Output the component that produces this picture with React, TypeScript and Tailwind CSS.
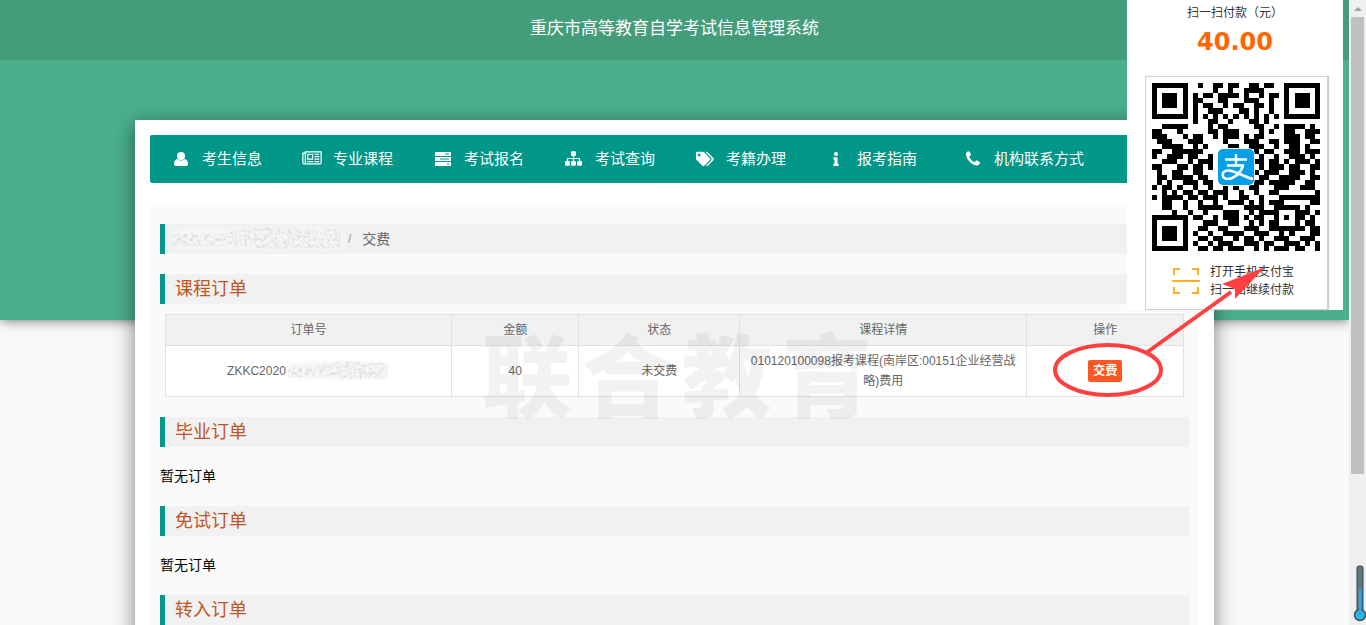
import type { ReactNode } from "react";
import { FaInfo, FaTags } from "react-icons/fa";

const qrRows = [
  "111111100100110110011011001111111",
  "100000100000100100111100001000001",
  "101110101011011110100101101011101",
  "101110101100011000111001001011101",
  "101110101011001011001101001011101",
  "100000101001110001101001001000001",
  "111111101010101010101010101111111",
  "000000001001100100011010000000000",
  "001111100001011000001100101111010",
  "110001000001101110000101001100111",
  "111000101100101110101100001110110",
  "011100011100001000111001101110011",
  "001111001010000110011100100110100",
  "110011111100000000001011001110111",
  "100111011001000000000100100111010",
  "001110010111000000001101101011101",
  "110001101101000000000101110110011",
  "010011001100000000001011100111010",
  "011011110110000000000110011110011",
  "010100111011000000001101111100110",
  "101101001001001010011000111001110",
  "001010110110111001001001100000001",
  "101111011011101001100100011111111",
  "001100100100100111010101110000011",
  "001100100111110000111100111110100",
  "000010010010001110010111100011101",
  "111111101100101110101100101011010",
  "100000100011100110010101100010110",
  "101110100110011000111001111111011",
  "101110101001001111001110010100011",
  "101110100110110010110100111001110",
  "100000101001011100111011001110101",
  "111111100110110111001010111011001",
];

const qrPath = qrRows
  .flatMap((row, y) => [...row].map((cell, x) => (cell === "1" ? `M${x} ${y}h1v1h-1z` : "")))
  .join("");

const navItems: { label: string; icon: ReactNode }[] = [
  {
    label: "考生信息",
    icon: (
      <svg viewBox="0 0 16 16" className="size-4 fill-current">
        <circle cx="8" cy="5" r="4" />
        <path d="M4.600 8Q8 11 11.400 8Q15 8.500 15 13Q15 15 13 15H3Q1 15 1 13Q1 8.500 4.600 8z" />
      </svg>
    ),
  },
  {
    label: "专业课程",
    icon: (
      <svg viewBox="0 0 2048 1792" className="h-[17px] w-5 fill-current">
        <path d="M1024 512h-384v384h384v-384zm128 640v128h-640v-128h640zm0-768v640h-640v-640h640zm640 768v128h-512v-128h512zm0-256v128h-512v-128h512zm0-256v128h-512v-128h512zm0-256v128h-512v-128h512zm-1536 960v-960h-128v960q0 26 19 45t45 19 45-19 19-45zm1664 0v-1088h-1536v1088q0 33-11 64h1483q26 0 45-19t19-45zm128-1216v1216q0 80-56 136t-136 56h-1664q-80 0-136-56t-56-136v-1088h256v-128h1792z" />
      </svg>
    ),
  },
  {
    label: "考试报名",
    icon: (
      <svg viewBox="0 0 18 14" className="h-[14px] w-[18px] fill-current">
        <path
          fillRule="evenodd"
          d="M1 0h16v4H1zM11 1.5v1h4v-1zM1 5h16v4H1zM6 6.5v1h9v-1zM1 10h16v4H1zM13 11.5v1h2v-1z"
        />
      </svg>
    ),
  },
  {
    label: "考试查询",
    icon: (
      <svg viewBox="0 0 1792 1792" className="size-[17px] fill-current">
        <path d="M1792 1248v320q0 40-28 68t-68 28h-320q-40 0-68-28t-28-68v-320q0-40 28-68t68-28h96v-192h-512v192h96q40 0 68 28t28 68v320q0 40-28 68t-68 28h-320q-40 0-68-28t-28-68v-320q0-40 28-68t68-28h96v-192h-512v192h96q40 0 68 28t28 68v320q0 40-28 68t-68 28h-320q-40 0-68-28t-28-68v-320q0-40 28-68t68-28h96v-192q0-52 38-90t90-38h512v-192h-96q-40 0-68-28t-28-68v-320q0-40 28-68t68-28h320q40 0 68 28t28 68v320q0 40-28 68t-68 28h-96v192h512q52 0 90 38t38 90v192h96q40 0 68 28t28 68z" />
      </svg>
    ),
  },
  { label: "考籍办理", icon: <FaTags className="size-[18px]" /> },
  { label: "报考指南", icon: <FaInfo className="size-[14px]" /> },
  {
    label: "机构联系方式",
    icon: (
      <svg viewBox="0 0 1792 1792" className="size-[18px] fill-current">
        <path d="M1600 1240q0 27-10 70.5t-21 68.5q-21 50-122 106-94 51-186 51-27 0-53-3.5t-57.5-12.5-47-14.5-55.5-20.5-49-18q-98-35-175-83-127-79-264-216t-216-264q-48-77-83-175-3-9-18-49t-20.5-55.5-14.5-47-12.5-57.5-3.5-53q0-92 51-186 56-101 106-122 25-11 68.5-21t70.5-10q14 0 21 3 18 6 53 76 11 19 30 54t35 63.5 31 53.5q3 4 17.5 25t21.5 35.5 7 28.5q0 20-28.5 50t-62 55-62 53-28.5 46q0 9 5 22.5t8.5 20.5 14 24 11.5 19q76 137 174 235t235 174q2 1 19 11.5t24 14 20.5 8.5 22.5 5q18 0 46-28.5t53-62 55-62 50-28.5q14 0 28.5 7t35.5 21.5 25 17.5q25 15 53.5 31t63.5 35 54 30q70 35 76 53 3 7 3 21z" />
      </svg>
    ),
  },
];

// grainy patch over private data
function Smudge({ id, className }: { id: string; className: string }) {
  return (
    <svg className={className} aria-hidden="true">
      <defs>
        <filter id={`${id}-noise`} x="0" y="0" width="100%" height="100%">
          <feTurbulence type="fractalNoise" baseFrequency="0.3" numOctaves="3" seed="4" />
          <feColorMatrix values="0 0 0 0 0.72  0 0 0 0 0.72  0 0 0 0 0.72  2.6 0 0 0 -1.05" />
          <feComposite in2="SourceGraphic" operator="in" />
        </filter>
        <filter id={`${id}-soft`}>
          <feGaussianBlur stdDeviation="2" />
        </filter>
      </defs>
      <rect x="1%" y="12%" width="98%" height="70%" rx="8" fill="#f6f6f6" filter={`url(#${id}-soft)`} />
      <g filter={`url(#${id}-noise)`}>
        <rect x="0" y="30%" width="60%" height="45%" rx="4" />
        <ellipse cx="58%" cy="46%" rx="30%" ry="38%" />
        <rect x="60%" y="15%" width="38%" height="68%" rx="7" />
      </g>
    </svg>
  );
}

function SectionTitle({ children }: { children: ReactNode }) {
  return (
    <h2 className="h-[30px] border-l-5 border-[#009688] bg-[#f1f1f1] pl-2.5 text-lg leading-[30px] text-[#c0561f]">
      {children}
    </h2>
  );
}

function NavBar() {
  return (
    <nav className="flex h-12 items-center gap-10 rounded-xs bg-[#009688] pl-[21px] text-[15px] whitespace-nowrap text-white">
      {navItems.map((item) => (
        <a key={item.label} href="#" className="flex items-center gap-[11px] last:ml-1.5">
          <span className="flex w-5 justify-center">{item.icon}</span>
          {item.label}
        </a>
      ))}
    </nav>
  );
}

function OrderTable() {
  return (
    <div className="mx-[5px] mt-2.5 mb-5">
      <table className="w-full table-fixed border-collapse bg-white text-center text-xs leading-5 text-[#666] [&_td]:border [&_td]:border-[#e2e2e2] [&_td]:px-2.5 [&_td]:py-[5px] [&_th]:border [&_th]:border-[#e2e2e2] [&_th]:py-[5px] [&_th]:font-normal">
        <thead className="bg-[#f1f1f1]">
          <tr>
            <th className="w-[28.1%]">订单号</th>
            <th className="w-[12.5%]">金额</th>
            <th className="w-[15.8%]">状态</th>
            <th className="w-[28.2%]">课程详情</th>
            <th>操作</th>
          </tr>
        </thead>
        <tbody>
          <tr>
            <td>
              <span className="flex items-center justify-center">
                ZKKC2020
                <Smudge id="order" className="h-6 w-[104px]" />
              </span>
            </td>
            <td>40</td>
            <td>未交费</td>
            <td>010120100098报考课程(南岸区:00151企业经营战略)费用</td>
            <td>
              <button className="h-[22px] rounded-xs bg-[#ff5722] px-[5px] align-middle font-bold text-white">
                交费
              </button>
            </td>
          </tr>
        </tbody>
      </table>
    </div>
  );
}

function PayPanel() {
  return (
    <aside className="absolute top-0 right-1.5 h-[310px] w-[216px] bg-white text-center">
      <p className="pt-1 text-xs leading-[18px] text-[#333]">扫一扫付款（元）</p>
      <p className="font-['DejaVu_Sans',sans-serif] text-2xl leading-10 font-bold text-[#ff6600]">
        40.00
      </p>
      <div className="mt-3.5 ml-[18px] h-[234px] w-[183px] border border-[#d3d3d3] p-1.5 shadow-[1px_0_1px_#ccc]">
        <div className="relative size-[168px]">
          <svg viewBox="0 0 33 33" className="size-full" shapeRendering="crispEdges">
            <path d={qrPath} />
          </svg>
          <svg viewBox="0 0 38 38" className="absolute top-[65px] left-[65px] size-[38px]">
            <rect width="38" height="38" rx="7" fill="#fff" />
            <rect x="1" y="1" width="36" height="36" rx="5" fill="#069fe8" />
            <g fill="none" stroke="#fff" strokeLinecap="butt">
              <path d="M8 11.5h22M19 6v11M10 17.5h17" strokeWidth="2.4" />
              <path
                d="M26 17.500C24 25 17 31 10.500 31C4 31 4 22.500 11 22.500C18 22.500 26 28.500 36 31"
                strokeWidth="2.6"
              />
            </g>
          </svg>
        </div>
        <div className="mt-3 ml-5 flex items-center gap-2.5">
          <svg viewBox="0 0 28 28" className="size-7" fill="none" stroke="#ffb020" strokeWidth="2">
            <path d="M2 8V2h6M20 2h6v6M26 20v6h-6M8 26H2v-6M0 14h28" />
          </svg>
          <p className="text-left text-xs leading-[18px] text-[#333]">
            打开手机支付宝
            <br />
            扫一扫继续付款
          </p>
        </div>
      </div>
    </aside>
  );
}

function Annotation() {
  return (
    <svg
      viewBox="0 0 220 140"
      className="pointer-events-none absolute top-[260px] right-[78px] h-[140px] w-[220px]"
      aria-hidden="true"
    >
      <ellipse cx="57" cy="110" rx="53" ry="25" fill="none" stroke="#ff4040" strokeWidth="4" />
      <path d="M95 93L180 32" stroke="#ff4040" strokeWidth="4" />
      <path d="M214 7L171 24L184 29L184 39Z" fill="#ff4040" />
    </svg>
  );
}

function ScrollTrack() {
  return (
    <div className="relative flex w-[17px] shrink-0 flex-col items-center bg-[#f0f0f0]">
      <svg viewBox="0 0 17 17" className="size-[17px] fill-[#a0a0a0]">
        <path d="M5 11l4-4 4 4z" />
      </svg>
      <div className="h-[457px] w-[13px] bg-[#c0c0c0]" />
      <svg viewBox="0 0 14 58" className="absolute right-0 bottom-0.5 h-[58px] w-[14px]">
        <rect x="5" y="1" width="6" height="46" rx="2" fill="#607880" stroke="#38454d" />
        <circle cx="8" cy="50" r="5.500" fill="#29b6e8" stroke="#45525a" strokeWidth="1.500" />
        <path d="M8 24v26" stroke="#29a8e8" strokeWidth="2.500" />
      </svg>
    </div>
  );
}

export default function App() {
  return (
    <div className="flex h-screen overflow-hidden bg-[#fafafa] font-['Liberation_Sans','Noto_Sans_CJK_SC',sans-serif] text-sm text-black">
      <div className="relative min-w-0 flex-1 overflow-hidden">
        <header className="h-80 bg-[#4ab08b] shadow-[0_0_12px_rgba(0,0,0,0.6)]">
          <h1 className="h-[60px] bg-[#439d7b] text-center text-[17px] leading-[58px] text-white">
            重庆市高等教育自学考试信息管理系统
          </h1>
        </header>

        <main className="relative mx-auto -mt-[200px] w-4/5 bg-white p-[15px] shadow-[0_5px_20px_rgba(0,0,0,0.5)]">
          <NavBar />
          <div className="relative mt-[21px] min-h-[500px] bg-[#fafafa] px-2.5 pt-5">
            <div className="mb-5 flex h-[30px] items-center border-l-5 border-[#009688] bg-[#f1f1f1] pl-1.5 text-[#666]">
              <Smudge id="crumb" className="h-7 w-[176px]" />
              <span className="px-px text-xs text-[#999]">/</span>
              <a href="#" className="ml-2.5">
                交费
              </a>
            </div>

            <SectionTitle>课程订单</SectionTitle>
            <OrderTable />

            <SectionTitle>毕业订单</SectionTitle>
            <p className="py-5 leading-[19px]">暂无订单</p>
            <SectionTitle>免试订单</SectionTitle>
            <p className="py-5 leading-[19px]">暂无订单</p>
            <SectionTitle>转入订单</SectionTitle>
            <p className="py-5 leading-[19px]">暂无订单</p>

            <div
              className="pointer-events-none absolute top-[130px] left-[332px] flex gap-2.5 text-[90px] leading-[90px] font-black text-black/5"
              aria-hidden="true"
            >
              {["联", "合", "教", "育"].map((char) => (
                <span key={char}>{char}</span>
              ))}
            </div>
          </div>
        </main>

        <PayPanel />
        <Annotation />
      </div>
      <ScrollTrack />
    </div>
  );
}
